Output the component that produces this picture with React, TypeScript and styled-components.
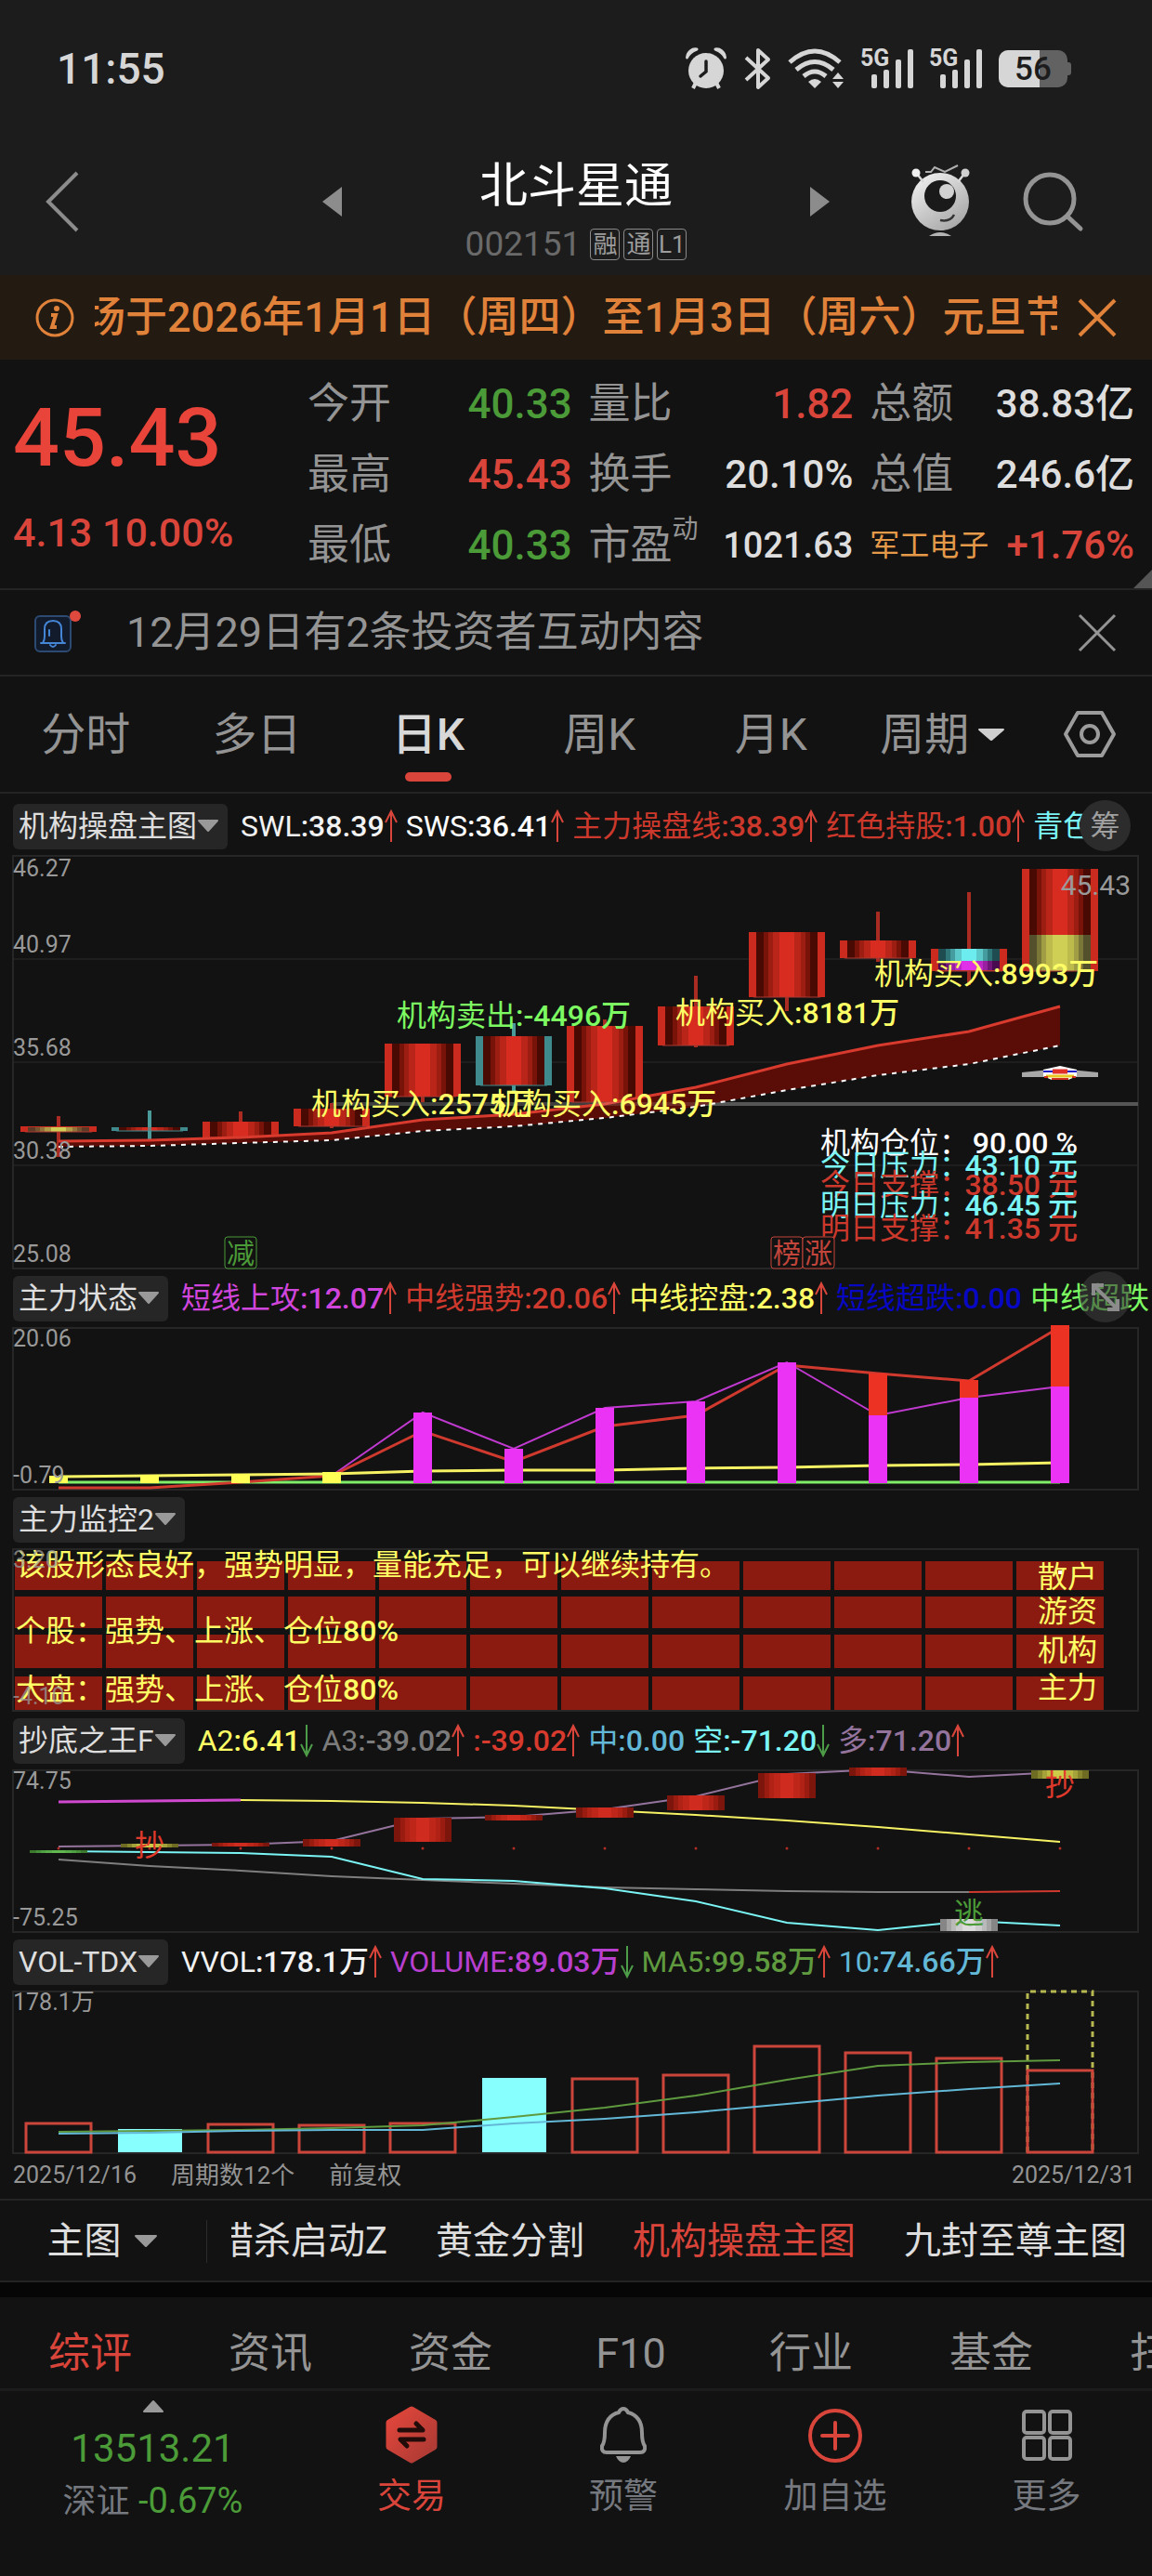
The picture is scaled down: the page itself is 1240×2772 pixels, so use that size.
import React from "react";
import styled, { createGlobalStyle } from "styled-components";

const color = {
  page: "#121212",
  header: "#1c1c1c",
  line: "#242424",
  red: "#d9453a",
  green: "#4b9b38",
  muted: "#949494",
  text: "#dedede",
  orange: "#e0823a",
  yellow: "#ffff66",
  cyan: "#7af4f4",
  lime: "#7dfa62",
};

const fontStack = `Roboto, "Noto Sans CJK SC", sans-serif`;

const GlobalStyle = createGlobalStyle`
  *, *::before, *::after { box-sizing: border-box; }
  html, body { margin: 0; background: ${color.page}; }
  body { font-family: ${fontStack}; color: ${color.text}; }
  button { font: inherit; color: inherit; background: none; border: 0; padding: 0; margin: 0; cursor: pointer; }
  a { color: inherit; text-decoration: none; }
  p, h1, h2 { margin: 0; font-weight: inherit; }
  svg { display: block; flex: none; overflow: visible; }
  svg text { font-family: ${fontStack}; }
`;

const Page = styled.div`
  background: ${color.page};
  overflow: hidden;
`;

/* ---------- status bar ---------- */

const StatusBar = styled.div`
  display: flex;
  align-items: center;
  justify-content: space-between;
  height: 148px;
  padding: 0 87px 0 61px;
  background: ${color.header};
  color: #d6d6d6;
`;

const Clock = styled.time`
  font-size: 46px;
  font-weight: 500;
  line-height: 52px;
`;

const StatusIcons = styled.div`
  display: flex;
  align-items: center;
  gap: 19px;
`;

/* ---------- header ---------- */

const Header = styled.header`
  display: grid;
  grid-template-columns: 1fr 546px 1fr;
  align-items: center;
  height: 148px;
  padding-bottom: 10px;
  background: ${color.header};
  color: ${color.muted};
`;

const HeaderSide = styled.div<{ $end?: boolean }>`
  display: flex;
  align-items: center;
  gap: 54px;
  justify-content: ${(p) => (p.$end ? "flex-end" : "flex-start")};
  padding: ${(p) => (p.$end ? "0 74px 0 0" : "0 0 0 48px")};
`;

const Switcher = styled.div`
  display: flex;
  align-items: center;
  justify-content: space-between;
`;

const TitleBlock = styled.div`
  display: flex;
  flex-direction: column;
  align-items: center;
  gap: 16px;
  padding-top: 20px;
`;

const Title = styled.h1`
  font-size: 52px;
  line-height: 56px;
  color: #ffffff;
`;

const SubTitle = styled.div`
  display: flex;
  align-items: center;
  gap: 4px;
  font-size: 37px;
  line-height: 36px;
  color: #6a6a6a;
`;

const Code = styled.span`
  margin-right: 6px;
`;

const Tag = styled.span`
  display: flex;
  align-items: center;
  justify-content: center;
  width: 32px;
  height: 34px;
  border: 1px solid #8a8a8a;
  border-radius: 4px;
  font-size: 26px;
  line-height: 30px;
  color: #9c9c9c;
`;

/* ---------- notices ---------- */

const NoticeBar = styled.section`
  display: flex;
  align-items: center;
  gap: 22px;
  height: 91px;
  padding: 0 38px;
  background: #231a12;
  color: ${color.orange};
`;

const NoticeText = styled.p`
  flex: 1;
  min-width: 0;
  overflow: hidden;
  white-space: nowrap;
  text-indent: -12px;
  font-size: 45px;
  font-weight: 500;
  line-height: 60px;
`;

const AlertBar = styled.section`
  display: flex;
  align-items: center;
  height: 93px;
  padding: 0 38px 0 36px;
  border-bottom: 2px solid ${color.line};
  color: ${color.muted};
`;

const AlertText = styled.p`
  flex: 1;
  padding-left: 46px;
  font-size: 45px;
  line-height: 60px;
`;

/* ---------- quote ---------- */

const Quote = styled.section`
  position: relative;
  display: flex;
  height: 248px;
  padding: 10px 19px 0 0;
  border-bottom: 2px solid ${color.line};
`;

const PriceColumn = styled.div`
  flex: none;
  width: 331px;
  padding: 30px 0 0 14px;
  color: ${color.red};
`;

const Price = styled.p`
  font-size: 88px;
  font-weight: 500;
  line-height: 88px;
  color: #e8443a;
`;

const Change = styled.p`
  padding-top: 33px;
  font-size: 43px;
  font-weight: 500;
  line-height: 50px;
`;

const QuoteTable = styled.table`
  flex: 1;
  width: 100%;
  height: 228px;
  table-layout: fixed;
  border-collapse: collapse;
  white-space: nowrap;
`;

const QuoteLabel = styled.th<{ $width: string; $sector?: boolean }>`
  width: ${(p) => p.$width};
  height: 76px;
  padding: 0;
  text-align: left;
  font-weight: 400;
  font-size: ${(p) => (p.$sector ? "32px" : "45px")};
  line-height: 60px;
  color: ${(p) => (p.$sector ? "#e59a4a" : color.muted)};
`;

const Super = styled.sup`
  font-size: 28px;
  line-height: 0;
  vertical-align: 23px;
`;

const QuoteValue = styled.td<{ $tone: string; $size: number; $width?: string }>`
  width: ${(p) => p.$width || "auto"};
  padding: 0;
  text-align: right;
  font-weight: 500;
  font-size: ${(p) => p.$size}px;
  line-height: 60px;
  color: ${(p) => p.$tone};
`;

const Gap = styled.td`
  width: 2%;
  padding: 0;
`;

const Corner = styled.span`
  position: absolute;
  right: 0;
  bottom: 0;
  border-style: solid;
  border-width: 0 0 20px 20px;
  border-color: transparent transparent #555555 transparent;
`;

/* ---------- period tabs ---------- */

const PeriodTabs = styled.nav`
  display: flex;
  height: 126px;
  border-bottom: 2px solid ${color.line};
`;

const PeriodTab = styled.button<{ $active?: boolean }>`
  position: relative;
  flex: 185;
  display: flex;
  align-items: center;
  justify-content: center;
  gap: 10px;
  padding-top: 2px;
  font-size: 48px;
  font-weight: ${(p) => (p.$active ? 500 : 400)};
  line-height: 60px;
  color: ${(p) => (p.$active ? "#d8d8d8" : color.muted)};

  &::after {
    content: "";
    display: ${(p) => (p.$active ? "block" : "none")};
    position: absolute;
    bottom: 11px;
    width: 50px;
    height: 10px;
    border-radius: 5px;
    background: ${color.red};
  }
`;

const SettingsButton = styled.button`
  flex: 134;
  display: flex;
  align-items: center;
  justify-content: center;
`;

/* ---------- indicator rows ---------- */

const IndicatorRow = styled.div<{ $first?: boolean }>`
  position: relative;
  display: flex;
  align-items: center;
  gap: 9px;
  height: ${(p) => (p.$first ? "66px" : "62px")};
  padding: ${(p) => (p.$first ? "4px 0 0 14px" : "0 0 0 14px")};
  overflow: hidden;
  white-space: nowrap;
  font-size: 32px;
  line-height: 48px;
`;

const IndicatorName = styled.button`
  flex: none;
  display: flex;
  align-items: center;
  gap: 1px;
  height: 49px;
  margin-right: 5px;
  padding: 0 10px 0 6px;
  border-radius: 6px;
  background: #262626;
  color: ${color.text};
`;

const Reading = styled.span<{ $tone: string }>`
  flex: none;
  display: flex;
  align-items: center;
  font-weight: 500;
  color: ${(p) => p.$tone};
`;

const Cjk = styled.span`
  font-weight: 400;
`;

const RoundButton = styled.button<{ $faint?: boolean }>`
  position: absolute;
  right: 23px;
  top: ${(p) => (p.$faint ? "2px" : "7px")};
  display: flex;
  align-items: center;
  justify-content: center;
  width: 55px;
  height: 55px;
  border-radius: 50%;
  background: ${(p) => (p.$faint ? "rgba(60, 60, 60, 0.6)" : "#2c2c2c")};
  color: #a0a0a0;
  font-size: 32px;
  line-height: 48px;
`;

const Chart = styled.svg`
  width: 100%;
  height: auto;
`;

const ChartFooter = styled.div`
  display: flex;
  align-items: center;
  gap: 37px;
  height: 48px;
  padding: 0 18px 2px 14px;
  font-size: 26px;
  line-height: 32px;
  color: ${color.muted};
`;

const ChartDate = styled.time<{ $end?: boolean }>`
  margin-left: ${(p) => (p.$end ? "auto" : "0")};
  font-size: 25px;
`;

/* ---------- formula strip ---------- */

const FormulaStrip = styled.nav`
  display: flex;
  align-items: center;
  height: 90px;
  padding-top: 2px;
  border-top: 2px solid ${color.line};
  border-bottom: 2px solid ${color.line};
  font-size: 40px;
  line-height: 48px;
  color: ${color.text};
`;

const FormulaMenu = styled.button`
  flex: none;
  display: flex;
  align-items: center;
  justify-content: center;
  gap: 14px;
  width: 223px;
  height: 46px;
  padding-right: 3px;
  border-right: 1px solid #2c2c2c;
`;

const FormulaList = styled.div`
  flex: 1;
  min-width: 0;
  display: flex;
  gap: 52px;
  margin-left: 26px;
  overflow: hidden;

  & > :first-child {
    margin-left: -16px;
  }
`;

const FormulaItem = styled.button<{ $active?: boolean }>`
  flex: none;
  white-space: nowrap;
  color: ${(p) => (p.$active ? color.red : "inherit")};
`;

/* ---------- lower tabs and bottom bar ---------- */

const Band = styled.div`
  height: 16px;
  background: #060606;
`;

const InfoTabs = styled.nav`
  display: flex;
  height: 101px;
  padding-top: 24px;
  border-bottom: 3px solid #1c1c1c;
  overflow: hidden;
`;

const InfoTab = styled.button<{ $active?: boolean }>`
  flex: none;
  width: 194px;
  font-size: 45px;
  line-height: 60px;
  text-align: center;
  color: ${(p) => (p.$active ? color.red : color.muted)};
`;

const BottomBar = styled.nav`
  display: grid;
  grid-template-columns: 329fr 228fr 228fr 228fr 227fr;
  height: 199px;
`;

const IndexLink = styled.a`
  display: flex;
  flex-direction: column;
  align-items: center;
  padding-top: 9px;
  color: ${color.green};
`;

const IndexValue = styled.span`
  padding-top: 12px;
  font-size: 42px;
  line-height: 54px;
`;

const IndexChange = styled.span`
  padding-top: 4px;
  font-size: 38px;
  line-height: 50px;
`;

const IndexName = styled.span`
  font-size: 36px;
  line-height: 36px;
  color: #75797f;
`;

const NavLink = styled.a<{ $active?: boolean }>`
  display: flex;
  flex-direction: column;
  align-items: center;
  gap: 11px;
  padding-top: 15px;
  font-size: 37px;
  line-height: 48px;
  color: ${(p) => (p.$active ? color.red : "#75797f")};
`;

/* ---------- small drawings ---------- */

const Caret = ({ fill = "#999999", w = 22, up = false }: { fill?: string; w?: number; up?: boolean }) => (
  <svg width={w} height="14" viewBox="0 0 22 14" preserveAspectRatio="none" aria-hidden="true">
    <path
      d={up ? "M1 13 L11 2 L21 13 Z" : "M1 1 L21 1 L11 12 Z"}
      fill={fill}
      stroke={fill}
      strokeWidth="2"
      strokeLinejoin="round"
    />
  </svg>
);

const Trend = ({ down = false }: { down?: boolean }) => (
  <svg width="14" height="34" viewBox="0 0 14 34" aria-hidden="true">
    <path
      d={down ? "M7 0V33M1 21L7 33L13 21" : "M7 34V1M1 13L7 1L13 13"}
      fill="none"
      stroke={down ? "#4c9c48" : color.red}
      strokeWidth="2"
    />
  </svg>
);

const Cross = ({ width = 3 }: { width?: number }) => (
  <svg width="42" height="42" viewBox="0 0 42 42" aria-hidden="true">
    <path d="M2 2L40 40M40 2L2 40" stroke="currentColor" strokeWidth={width} />
  </svg>
);

const Signal = () => (
  <svg width="55" height="46" viewBox="0 0 55 46" aria-hidden="true">
    <text x="-1" y="20" fontSize="25" fontWeight="700" fill="#d6d6d6">
      5G
    </text>
    {[29, 24, 13, 2].map((y, i) => (
      <rect key={i} x={11 + i * 13} y={y} width="6" height={44 - y} rx="2" fill="#d6d6d6" />
    ))}
  </svg>
);

const AlarmIcon = () => (
  <svg width="44" height="46" viewBox="0 0 44 46" aria-hidden="true">
    <circle cx="22" cy="25" r="19" fill="#d6d6d6" />
    <path d="M1.500 11C2 5 7 1 12 2Q4 5 1.500 11ZM42.500 11C42 5 37 1 32 2Q40 5 42.500 11Z" fill="#d6d6d6" stroke="#d6d6d6" strokeWidth="3" strokeLinejoin="round" />
    <path d="M11 38L8 44M33 38L36 44" stroke="#d6d6d6" strokeWidth="4" />
    <path d="M22 15V26L16 31" fill="none" stroke="#1c1c1c" strokeWidth="3.5" strokeLinecap="round" />
  </svg>
);

const BluetoothIcon = () => (
  <svg width="28" height="46" viewBox="0 0 28 46" aria-hidden="true">
    <path d="M2 11L26 33L15 43V3L26 13L2 35" fill="none" stroke="#d6d6d6" strokeWidth="4" strokeLinejoin="round" />
  </svg>
);

const WifiIcon = () => (
  <svg width="60" height="46" viewBox="0 0 60 46" aria-hidden="true">
    <g fill="none" stroke="#d6d6d6" strokeWidth="5">
      <path d="M2 16Q29 -8 56 16" />
      <path d="M9 24Q29 7 49 24" />
      <path d="M17 31Q29 21 41 31" />
    </g>
    <path d="M22 37Q29 31 36 37L29 44Z" fill="#d6d6d6" />
    <path d="M48 34L54 27L60 34ZM48 37L54 44L60 37Z" fill="#d6d6d6" />
  </svg>
);

const BatteryIcon = () => (
  <svg width="78" height="42" viewBox="0 0 78 42" aria-hidden="true">
    <rect x="70" y="14" width="8" height="14" rx="3" fill="#626262" />
    <rect x="0" y="1" width="74" height="40" rx="10" fill="#626262" />
    <path d="M44 1H10A10 10 0 0 0 0 11V31A10 10 0 0 0 10 41H44Z" fill="#d6d6d6" />
    <text x="37" y="33" fontSize="35" fontWeight="500" textAnchor="middle" fill="#1c1c1c">
      56
    </text>
  </svg>
);

const RobotIcon = () => (
  <svg width="66" height="80" viewBox="981 177 66 80" aria-hidden="true">
    <defs>
      <linearGradient id="robot" x1="0" y1="0" x2="0.7" y2="1">
        <stop offset="0" stopColor="#f6f6f6" />
        <stop offset="1" stopColor="#a8a8a8" />
      </linearGradient>
    </defs>
    <circle cx="1013" cy="217" r="31" fill="url(#robot)" />
    <path d="M988 187L995 196M1039 187L1032 196" stroke="#d8d8d8" strokeWidth="2.5" />
    <circle cx="987" cy="186" r="4.5" fill="#f0f0f0" />
    <circle cx="1040" cy="186" r="4.5" fill="#d0d0d0" />
    <path d="M997 185H1003L1007 180L1018 185L1032 178" fill="none" stroke="#b0b0b0" strokeWidth="2" />
    <circle cx="1013" cy="211" r="17" fill="#1a1a1a" />
    <circle cx="1020" cy="206" r="8" fill="#d2d2d2" />
    <path d="M1013 237Q1024 239 1028 231" fill="none" stroke="#333333" strokeWidth="2.5" />
    <path d="M1001 254Q1013 246 1025 254Z" fill="#b4b4b4" />
  </svg>
);

const SearchIcon = () => (
  <svg width="66" height="66" viewBox="0 0 66 66" aria-hidden="true">
    <g fill="none" stroke="#949494" strokeWidth="5" strokeLinecap="round">
      <circle cx="30" cy="30" r="26" />
      <path d="M49 49L63 62" />
    </g>
  </svg>
);

const InfoIcon = () => (
  <svg width="42" height="42" viewBox="0 0 42 42" aria-hidden="true">
    <circle cx="21" cy="21" r="19" fill="none" stroke="currentColor" strokeWidth="3" />
    <circle cx="23" cy="11" r="3" fill="currentColor" />
    <path d="M17 18H22L18 31H23" fill="none" stroke="currentColor" strokeWidth="4" />
  </svg>
);

const BellBadge = () => (
  <svg width="54" height="50" viewBox="0 0 54 50" aria-hidden="true">
    <rect x="2" y="7" width="38" height="38" rx="5" fill="#121b2b" stroke="#2c4a72" strokeWidth="2" />
    <path
      d="M8 36H34M10 36Q12 33 12 29V21Q12 12 21 12T30 21V29Q30 33 32 36M18 38Q21 42 24 38M17 22V28"
      fill="none"
      stroke="#4585d6"
      strokeWidth="2"
      strokeLinecap="round"
    />
    <circle cx="45" cy="7" r="6" fill="#e0493e" />
  </svg>
);

const GearIcon = () => (
  <svg width="58" height="52" viewBox="0 0 58 52" aria-hidden="true">
    <g fill="none" stroke="#9c9c9c" strokeWidth="4" strokeLinejoin="round">
      <path d="M3 26L16 3H42L55 26L42 49H16Z" />
      <circle cx="29" cy="26" r="9" />
    </g>
  </svg>
);

const TradeIcon = () => (
  <svg width="56" height="64" viewBox="0 0 56 64" aria-hidden="true">
    <defs>
      <linearGradient id="trade" x1="0" y1="0" x2="1" y2="1">
        <stop offset="0" stopColor="#e5463b" />
        <stop offset="1" stopColor="#a83a34" />
      </linearGradient>
    </defs>
    <path d="M28 5L52 19V45L28 59L4 45V19Z" fill="url(#trade)" stroke="url(#trade)" strokeWidth="7" strokeLinejoin="round" />
    <path d="M15 27H40L33 20M41 37H16L23 44" fill="none" stroke="#220c0a" strokeWidth="5" strokeLinecap="round" strokeLinejoin="round" />
  </svg>
);

const BellIcon = () => (
  <svg width="56" height="64" viewBox="0 0 56 64" aria-hidden="true">
    <path
      d="M28 4Q31 4 33 8Q48 12 48 30Q48 40 51 44Q52 51 46 51H10Q4 51 5 44Q8 40 8 30Q8 12 23 8Q25 4 28 4Z"
      fill="none"
      stroke="#949494"
      strokeWidth="4"
    />
    <path d="M20 55H36Q33 62 28 62T20 55Z" fill="#949494" />
  </svg>
);

const AddIcon = () => (
  <svg width="62" height="64" viewBox="0 0 62 64" aria-hidden="true">
    <circle cx="31" cy="33" r="27" fill="none" stroke={color.red} strokeWidth="4" />
    <path d="M31 19V47M17 33H45" stroke={color.red} strokeWidth="4" strokeLinecap="round" />
  </svg>
);

const GridIcon = () => (
  <svg width="56" height="64" viewBox="0 0 56 64" aria-hidden="true">
    {[3, 31].map((x) =>
      [7, 35].map((y) => (
        <rect key={`${x}-${y}`} x={x} y={y} width="22" height="23" rx="3" fill="none" stroke="#949494" strokeWidth="4" />
      ))
    )}
  </svg>
);

/* ---------- charts ---------- */

const X = Array.from({ length: 12 }, (_, i) => 63 + i * 98);
const series = (ys: number[], from = 0) => ys.map((y, i) => `${X[i + from]},${y}`).join(" ");

const Line = ({ ys, from = 0, stroke, width = 2, dash }: { ys: number[]; from?: number; stroke: string; width?: number; dash?: string }) => (
  <polyline points={series(ys, from)} fill="none" stroke={stroke} strokeWidth={width} strokeDasharray={dash} />
);

const Frame = ({ top, height }: { top: number; height: number }) => (
  <rect x="14" y={top} width="1211" height={height} fill="none" stroke="#262626" strokeWidth="2" />
);

const Scale = ({ y, children }: { y: number; children: React.ReactNode }) => (
  <text x="14" y={y} fontSize="25" fill="#999999">
    {children}
  </text>
);

const shades: Record<string, string[]> = {
  red: ["#4a0a04", "#781309", "#9c1d12", "#ba251a", "#d92c20"],
  amber: ["#5c3a26", "#74522e", "#92743a", "#b09c46", "#cfcf56"],
  yellow: ["#55502c", "#7a7638", "#a09d44", "#bdbb4c", "#cfcf56"],
  cyan: ["#1f4c50", "#2f7678", "#459c9e", "#5cc8ca", "#6cecee"],
  magenta: ["#4a0a50", "#701478", "#9a20a2", "#bc28c6", "#e030e8"],
  boxRed: ["#7c150c", "#9a1b10", "#b02216", "#bf261a", "#cf2c1f"],
  boxYellow: ["#6e6c22", "#88862c", "#a4a238", "#bcba40", "#cccc48"],
  boxWhite: ["#868686", "#a4a4a4", "#bababa", "#cccccc", "#dcdcdc"],
  boxGreen: ["#3c7a30", "#46903a", "#50a044", "#58ac4a", "#62b850"],
};

const Gradient = ({ cx, y, h, half, tone }: { cx: number; y: number; h: number; half: number; tone: string }) => (
  <g>
    {shades[tone].map((fill, i) => {
      const w = Math.round(half * [1, 0.76, 0.6, 0.44, 0.24][i]);
      return <rect key={i} x={cx - w} y={y} width={w * 2} height={h} fill={fill} />;
    })}
  </g>
);

type Part = [string, number, number];
type Candle = { hi: number; top: number; bottom: number; lo: number; edge?: string; parts?: Part[] };

const teal = "#3f8a8c";
const candles: Candle[] = [
  { hi: 1201, top: 1212, bottom: 1218, lo: 1245, parts: [["amber", 1213, 1218]] },
  { hi: 1195, top: 1213, bottom: 1217, lo: 1227, edge: teal },
  { hi: 1196, top: 1207, bottom: 1224, lo: 1226 },
  { hi: 1187, top: 1193, bottom: 1212, lo: 1214 },
  { hi: 1123, top: 1123, bottom: 1180, lo: 1186 },
  { hi: 1101, top: 1115, bottom: 1168, lo: 1176, edge: teal },
  { hi: 1097, top: 1104, bottom: 1186, lo: 1186 },
  { hi: 1050, top: 1083, bottom: 1125, lo: 1127 },
  { hi: 1003, top: 1003, bottom: 1073, lo: 1088 },
  { hi: 981, top: 1012, bottom: 1031, lo: 1035 },
  { hi: 960, top: 1021, bottom: 1045, lo: 1060, parts: [["cyan", 1021, 1034], ["magenta", 1034, 1044]] },
  { hi: 935, top: 935, bottom: 1045, lo: 1045, parts: [["red", 935, 1006], ["yellow", 1006, 1045]] },
];

const trendHigh = [1228, 1227, 1224, 1219, 1205, 1199, 1188, 1170, 1145, 1125, 1110, 1083];
const trendLow = [1234, 1233, 1230, 1227, 1217, 1212, 1203, 1191, 1173, 1157, 1145, 1125];

const levels = [
  ["机构仓位：", "90.00 %", "#ffffff", 1241],
  ["今日压力：", "43.10 元", color.cyan, 1265],
  ["今日支撑：", "38.50 元", "#cc392c", 1286],
  ["明日压力：", "46.45 元", color.cyan, 1308],
  ["明日支撑：", "41.35 元", "#cc392c", 1333],
] as const;

const marks = [
  ["机构卖出", ":-4496万", 427, 1104, color.lime],
  ["机构买入", ":2575万", 335, 1199, color.yellow],
  ["机构买入", ":6945万", 530, 1199, color.yellow],
  ["机构买入", ":8181万", 727, 1101, color.yellow],
  ["机构买入", ":8993万", 941, 1059, color.yellow],
] as const;

const events = [
  ["减", 242, color.green],
  ["榜", 830, "#c2453b"],
  ["涨", 864, "#c2453b"],
] as const;

const MainChart = () => (
  <Chart viewBox="0 920 1240 446" role="img" aria-label="机构操盘主图">
    <Frame top={921} height={444} />
    <path d="M14 1032H1225M14 1143H1225M14 1254H1225" stroke="#2a2a2a" strokeWidth="1" />
    <path d="M357 1188H1225" stroke="#3e3e3e" strokeWidth="4" />
    {candles.map((c, i) => {
      const edge = c.edge || "#cb2b1e";
      const wick = c.edge ? "#4b9a9a" : "#a92b22";
      const parts: Part[] = c.parts || [["red", c.top, c.bottom]];
      return (
        <g key={i}>
          <rect x={X[i] - 2} y={c.hi} width="4" height={c.lo - c.hi} fill={wick} />
          <rect x={X[i] - 41} y={c.top} width="82" height={c.bottom - c.top} fill={edge} />
          {parts.map(([tone, a, b]) => (
            <Gradient key={a} cx={X[i]} y={a} h={b - a} half={33} tone={tone} />
          ))}
          <path d={`M${X[i] - 36} ${c.bottom}H${X[i] + 36}`} stroke={c.edge || "#a83a32"} strokeWidth="1" />
          {i === 1 && <rect x={X[i] - 2} y={c.hi} width="4" height={c.lo - c.hi} fill={wick} opacity="0.7" />}
        </g>
      );
    })}
    <polygon points={`${series(trendHigh)} ${trendLow.map((y, i) => `${X[i]},${y}`).reverse().join(" ")}`} fill="#5a0d07" />
    <Line ys={trendHigh} stroke="#d83a2e" width={3} />
    <Line ys={trendLow} stroke="#ffffff" dash="5 6" />
    <path d="M640 1188H1225" stroke="#ffffff" strokeOpacity="0.12" strokeWidth="4" />
    <Scale y={943}>46.27</Scale>
    <Scale y={1025}>40.97</Scale>
    <Scale y={1136}>35.68</Scale>
    <Scale y={1247}>30.38</Scale>
    <Scale y={1358}>25.08</Scale>
    <text x="1217" y="963" fontSize="30" textAnchor="end" fill="#9a9a9a">45.43</text>
    {marks.map(([name, value, x, y, fill]) => (
      <text key={x} x={x} y={y} fontSize="32" fill={fill}>
        {name}
        <tspan fontWeight="500">{value}</tspan>
      </text>
    ))}
    {levels.map(([name, value, fill, y]) => (
      <g key={y} fontSize="32" fill={fill}>
        <text x="883" y={y}>{name}</text>
        <text x="1160" y={y} textAnchor="end" fontWeight="500">{value}</text>
      </g>
    ))}
    {events.map(([name, x, tone]) => (
      <g key={name}>
        <rect x={x} y="1331" width="34" height="34" rx="3" fill={color.page} stroke={tone} strokeWidth="1" />
        <text x={x + 17} y="1359" fontSize="30" textAnchor="middle" fill={tone}>{name}</text>
      </g>
    ))}
    <path d="M1100 1154L1141 1150L1182 1154V1159H1100Z" fill="#a8a8a8" />
    <path d="M1123 1158V1151L1141 1147L1159 1151V1158L1150 1162H1132Z" fill="#ffffff" />
    <path d="M1123 1153H1159" stroke="#2020c8" strokeWidth="2" />
    <path d="M1133 1153H1149" stroke="#e03028" strokeWidth="5" />
    <path d="M1126 1158H1156" stroke="#e8c820" strokeWidth="3" />
    <path d="M1124 1159H1128M1154 1159H1158M1132 1161H1150" stroke="#d03020" strokeWidth="2" />
  </Chart>
);

const stateBars = [1588, 1587, 1586, 1584, 1520, 1559, 1515, 1508, 1466, 1523, 1504, 1492];
const stateRed: Record<number, number> = { 9: 1478, 10: 1485, 11: 1426 };

const StateChart = () => (
  <Chart viewBox="0 1428 1240 176" role="img" aria-label="主力状态">
    <Frame top={1429} height={174} />
    <Line ys={X.map(() => 1595)} stroke="#80ee68" width={3} />
    <Line from={3} ys={[1588, 1520, 1559, 1515, 1508, 1466, 1523, 1504, 1492]} stroke="#c03ad0" />
    <Line ys={[1601, 1601, 1595, 1588, 1540, 1573, 1535, 1523, 1469, 1478, 1486, 1428]} stroke="#d03a2e" width={3} />
    <Line ys={[1589, 1588, 1587, 1586, 1583, 1582, 1582, 1580, 1579, 1577, 1576, 1574]} stroke="#f6f264" width={3} />
    {stateBars.map((y, i) => (
      <g key={i}>
        {stateRed[i] && <rect x={X[i] - 10} y={stateRed[i]} width="20" height={y - stateRed[i]} fill="#ec3222" />}
        <rect x={X[i] - 10} y={y} width="20" height={1596 - y} fill={i < 4 ? "#ffff55" : "#ea33f4"} />
      </g>
    ))}
    <Scale y={1449}>20.06</Scale>
    <Scale y={1596}>-0.79</Scale>
  </Chart>
);

const monitorRows = [[1680, 31], [1718, 34], [1759, 36], [1804, 36]];
const players = [["散户", 1708], ["游资", 1745], ["机构", 1787], ["主力", 1827]] as const;

const MonitorChart = () => (
  <Chart viewBox="0 1666 1240 176" role="img" aria-label="主力监控2">
    <Frame top={1667} height={174} />
    {monitorRows.map(([y, h]) =>
      X.map((x) => <rect key={`${x}-${y}`} x={x - 47} y={y} width="94" height={h} fill="#8b1a10" />)
    )}
    <g fontSize="32" fill={color.yellow}>
      <text x="17" y="1695">该股形态良好，强势明显，量能充足，可以继续持有。</text>
      <text x="17" y="1766">个股：强势、上涨、仓位<tspan fontWeight="500">80%</tspan></text>
      <text x="17" y="1829">大盘：强势、上涨、仓位<tspan fontWeight="500">80%</tspan></text>
      {players.map(([name, y]) => (
        <text key={name} x="1117" y={y}>{name}</text>
      ))}
    </g>
    <rect x="1139" y="1690" width="4" height="4" fill="#ffffff" />
    <g opacity="0.75">
      <Scale y={1687}>3.20</Scale>
      <Scale y={1834}>-4.10</Scale>
    </g>
  </Chart>
);

const bottomBoxes: [number, number, number, string][] = [
  [0, 1991, 3, "boxGreen"],
  [1, 1984, 4, "boxYellow"],
  [2, 1983, 4, "boxRed"],
  [3, 1979, 8, "boxRed"],
  [4, 1956, 26, "boxRed"],
  [5, 1953, 6, "boxRed"],
  [6, 1945, 11, "boxRed"],
  [7, 1932, 16, "boxRed"],
  [8, 1908, 27, "boxRed"],
  [9, 1902, 9, "boxRed"],
  [10, 2065, 13, "boxWhite"],
  [11, 1905, 9, "boxYellow"],
];

const BottomChart = () => (
  <Chart viewBox="0 1904 1240 176" role="img" aria-label="抄底之王F">
    <Frame top={1905} height={174} />
    <Line ys={[2001, 2008, 2013, 2019, 2023, 2027, 2031, 2033, 2035, 2036, 2036]} stroke="#7e7e7e" />
    <Line from={10} ys={[2036, 2035]} stroke="#d03a2e" />
    <Line ys={[1992, 1993, 1994, 1998, 2022, 2024, 2032, 2046, 2069, 2077, 2067, 2072]} stroke={color.cyan} />
    <Line ys={[1939, 1938, 1937]} stroke="#d048d0" width={3} />
    <Line from={2} ys={[1937, 1938, 1940, 1943, 1948, 1953, 1959, 1966, 1974, 1982]} stroke="#f6f264" />
    <Line ys={[1987, 1986, 1985, 1981, 1957, 1955, 1947, 1933, 1909, 1904, 1912, 1907]} stroke="#94749c" />
    {X.map((x) => (
      <circle key={x} cx={x} cy="1989" r="1.5" fill="#b02c24" />
    ))}
    {bottomBoxes.map(([i, y, h, tone]) => (
      <Gradient key={i} cx={X[i]} y={y} h={h} half={31} tone={tone} />
    ))}
    <g fontSize="32" textAnchor="middle">
      <text x={X[1]} y="1997" fill="#e03a2c">抄</text>
      <text x={X[11]} y="1932" fill="#e03a2c">抄</text>
      <text x={X[10]} y="2070" fill={color.green}>逃</text>
    </g>
    <Scale y={1925}>74.75</Scale>
    <Scale y={2072}>-75.25</Scale>
  </Chart>
);

const volumes = [2285, 2291, 2286, 2287, 2285, 2236, 2237, 2233, 2202, 2209, 2215, 2228];

const VolumeChart = () => (
  <Chart viewBox="0 2142 1240 176" role="img" aria-label="VOL-TDX">
    <Frame top={2143} height={174} />
    <path d="M1106 2316V2143H1176V2316" fill="none" stroke="#b8b850" strokeWidth="3" strokeDasharray="6 5" />
    {volumes.map((y, i) =>
      i === 1 || i === 5 ? (
        <rect key={i} x={X[i] - 34} y={y} width="69" height={2316 - y} fill="#88ffff" />
      ) : (
        <rect key={i} x={X[i] - 35} y={y} width="70" height={2316 - y} fill="none" stroke="#cc453b" strokeWidth="3" />
      )
    )}
    <Line ys={[2294, 2293, 2292, 2290, 2287, 2278, 2268, 2255, 2238, 2223, 2219, 2217]} stroke="#5f9a3f" />
    <Line ys={[2296, 2295, 2293, 2292, 2292, 2285, 2280, 2273, 2264, 2255, 2248, 2242]} stroke="#62b8d6" />
    <Scale y={2163}>178.1万</Scale>
  </Chart>
);

/* ---------- data ---------- */

type Read = { name: string; value: string; tone: string; trend?: "up" | "down" };

const Readings = ({ items }: { items: Read[] }) => (
  <>
    {items.map((r, i) => (
      <Reading key={i} $tone={r.tone}>
        <span>
          <Cjk>{r.name}</Cjk>
          {r.value}
        </span>
        {r.trend && <Trend down={r.trend === "down"} />}
      </Reading>
    ))}
  </>
);

const mainReads: Read[] = [
  { name: "SWL", value: ":38.39", tone: "#f2f2f2", trend: "up" },
  { name: "SWS", value: ":36.41", tone: "#ffffff", trend: "up" },
  { name: "主力操盘线", value: ":38.39", tone: "#cc392c", trend: "up" },
  { name: "红色持股", value: ":1.00", tone: "#cc392c", trend: "up" },
  { name: "青色", value: "", tone: color.cyan },
];
const stateReads: Read[] = [
  { name: "短线上攻", value: ":12.07", tone: "#d045dc", trend: "up" },
  { name: "中线强势", value: ":20.06", tone: "#d03a2e", trend: "up" },
  { name: "中线控盘", value: ":2.38", tone: color.yellow, trend: "up" },
  { name: "短线超跌", value: ":0.00", tone: "#0808c4" },
  { name: "中线超跌", value: "", tone: color.lime },
];
const bottomReads: Read[] = [
  { name: "A2", value: ":6.41", tone: color.yellow, trend: "down" },
  { name: "A3", value: ":-39.02", tone: "#7c7c7c", trend: "up" },
  { name: "", value: ":-39.02", tone: "#d83a2e", trend: "up" },
  { name: "中", value: ":0.00", tone: "#62b8d6" },
  { name: "空", value: ":-71.20", tone: color.cyan, trend: "down" },
  { name: "多", value: ":71.20", tone: "#94749c", trend: "up" },
];
const volumeReads: Read[] = [
  { name: "VVOL", value: ":178.1万", tone: "#f2f2f2", trend: "up" },
  { name: "VOLUME", value: ":89.03万", tone: "#b83fd0", trend: "down" },
  { name: "MA5", value: ":99.58万", tone: "#5f9a3f", trend: "up" },
  { name: "10", value: ":74.66万", tone: "#62b8d6", trend: "up" },
];

export default function App() {
  return (
    <Page>
      <GlobalStyle />
      <StatusBar>
        <Clock>11:55</Clock>
        <StatusIcons>
          <AlarmIcon />
          <BluetoothIcon />
          <WifiIcon />
          <Signal />
          <Signal />
          <BatteryIcon />
        </StatusIcons>
      </StatusBar>

      <Header>
        <HeaderSide>
          <button aria-label="返回">
            <svg width="38" height="66" viewBox="0 0 38 66">
              <path d="M35 2L4 33L35 64" fill="none" stroke="#8c8c8c" strokeWidth="4" />
            </svg>
          </button>
        </HeaderSide>
        <Switcher>
          <button aria-label="上一只">
            <svg width="21" height="32" viewBox="0 0 21 32"><path d="M21 0V32L0 16Z" fill="#8c8c8c" /></svg>
          </button>
          <TitleBlock>
            <Title>北斗星通</Title>
            <SubTitle>
              <Code>002151</Code>
              <Tag>融</Tag>
              <Tag>通</Tag>
              <Tag>L1</Tag>
            </SubTitle>
          </TitleBlock>
          <button aria-label="下一只">
            <svg width="21" height="32" viewBox="0 0 21 32"><path d="M0 0V32L21 16Z" fill="#8c8c8c" /></svg>
          </button>
        </Switcher>
        <HeaderSide $end>
          <button aria-label="助手"><RobotIcon /></button>
          <button aria-label="搜索"><SearchIcon /></button>
        </HeaderSide>
      </Header>

      <NoticeBar>
        <InfoIcon />
        <NoticeText>场于2026年1月1日（周四）至1月3日（周六）元旦节休市</NoticeText>
        <button aria-label="关闭公告"><Cross width={4} /></button>
      </NoticeBar>

      <Quote>
        <PriceColumn>
          <Price>45.43</Price>
          <Change>4.13 10.00%</Change>
        </PriceColumn>
        <QuoteTable>
          <tbody>
            <tr>
              <QuoteLabel scope="row" $width="12%">今开</QuoteLabel>
              <QuoteValue $tone={color.green} $size={44} $width="20%">40.33</QuoteValue>
              <Gap />
              <QuoteLabel scope="row" $width="14%">量比</QuoteLabel>
              <QuoteValue $tone={color.red} $size={44} $width="18%">1.82</QuoteValue>
              <Gap />
              <QuoteLabel scope="row" $width="15%">总额</QuoteLabel>
              <QuoteValue $tone={color.text} $size={42}>38.83亿</QuoteValue>
            </tr>
            <tr>
              <QuoteLabel scope="row" $width="12%">最高</QuoteLabel>
              <QuoteValue $tone={color.red} $size={44}>45.43</QuoteValue>
              <Gap />
              <QuoteLabel scope="row" $width="14%">换手</QuoteLabel>
              <QuoteValue $tone={color.text} $size={42}>20.10%</QuoteValue>
              <Gap />
              <QuoteLabel scope="row" $width="15%">总值</QuoteLabel>
              <QuoteValue $tone={color.text} $size={42}>246.6亿</QuoteValue>
            </tr>
            <tr>
              <QuoteLabel scope="row" $width="12%">最低</QuoteLabel>
              <QuoteValue $tone={color.green} $size={44}>40.33</QuoteValue>
              <Gap />
              <QuoteLabel scope="row" $width="14%">市盈<Super>动</Super></QuoteLabel>
              <QuoteValue $tone={color.text} $size={38}>1021.63</QuoteValue>
              <Gap />
              <QuoteLabel scope="row" $width="15%" $sector>军工电子</QuoteLabel>
              <QuoteValue $tone={color.red} $size={42}>+1.76%</QuoteValue>
            </tr>
          </tbody>
        </QuoteTable>
        <Corner />
      </Quote>

      <AlertBar>
        <BellBadge />
        <AlertText>12月29日有2条投资者互动内容</AlertText>
        <button aria-label="关闭提醒"><Cross /></button>
      </AlertBar>

      <PeriodTabs>
        <PeriodTab>分时</PeriodTab>
        <PeriodTab>多日</PeriodTab>
        <PeriodTab $active>日K</PeriodTab>
        <PeriodTab>周K</PeriodTab>
        <PeriodTab>月K</PeriodTab>
        <PeriodTab>周期<Caret fill="#cfcfcf" w={28} /></PeriodTab>
        <SettingsButton aria-label="设置"><GearIcon /></SettingsButton>
      </PeriodTabs>

      <main>
        <IndicatorRow $first>
          <IndicatorName>机构操盘主图<Caret /></IndicatorName>
          <Readings items={mainReads} />
          <RoundButton>筹</RoundButton>
        </IndicatorRow>
        <MainChart />

        <IndicatorRow>
          <IndicatorName>主力状态<Caret /></IndicatorName>
          <Readings items={stateReads} />
          <RoundButton $faint aria-label="全屏">
            <svg width="30" height="30" viewBox="0 0 30 30">
              <path d="M2 13V2H13M28 17V28H17M3 3L27 27" fill="none" stroke="#8c8c8c" strokeWidth="4" />
            </svg>
          </RoundButton>
        </IndicatorRow>
        <StateChart />

        <IndicatorRow>
          <IndicatorName>主力监控2<Caret /></IndicatorName>
        </IndicatorRow>
        <MonitorChart />

        <IndicatorRow>
          <IndicatorName>抄底之王F<Caret /></IndicatorName>
          <Readings items={bottomReads} />
        </IndicatorRow>
        <BottomChart />

        <IndicatorRow>
          <IndicatorName>VOL-TDX<Caret /></IndicatorName>
          <Readings items={volumeReads} />
        </IndicatorRow>
        <VolumeChart />

        <ChartFooter>
          <ChartDate>2025/12/16</ChartDate>
          <span>周期数12个</span>
          <span>前复权</span>
          <ChartDate $end>2025/12/31</ChartDate>
        </ChartFooter>
      </main>

      <FormulaStrip>
        <FormulaMenu>主图<Caret w={24} /></FormulaMenu>
        <FormulaList>
          <FormulaItem>猎杀启动Z</FormulaItem>
          <FormulaItem>黄金分割</FormulaItem>
          <FormulaItem $active>机构操盘主图</FormulaItem>
          <FormulaItem>九封至尊主图</FormulaItem>
        </FormulaList>
      </FormulaStrip>

      <Band />

      <InfoTabs>
        <InfoTab $active>综评</InfoTab>
        <InfoTab>资讯</InfoTab>
        <InfoTab>资金</InfoTab>
        <InfoTab>F10</InfoTab>
        <InfoTab>行业</InfoTab>
        <InfoTab>基金</InfoTab>
        <InfoTab>扫雷</InfoTab>
      </InfoTabs>

      <BottomBar>
        <IndexLink href="#index">
          <Caret up />
          <IndexValue>13513.21</IndexValue>
          <IndexChange><IndexName>深证</IndexName> -0.67%</IndexChange>
        </IndexLink>
        <NavLink href="#trade" $active><TradeIcon />交易</NavLink>
        <NavLink href="#alert"><BellIcon />预警</NavLink>
        <NavLink href="#add"><AddIcon />加自选</NavLink>
        <NavLink href="#more"><GridIcon />更多</NavLink>
      </BottomBar>
    </Page>
  );
}
